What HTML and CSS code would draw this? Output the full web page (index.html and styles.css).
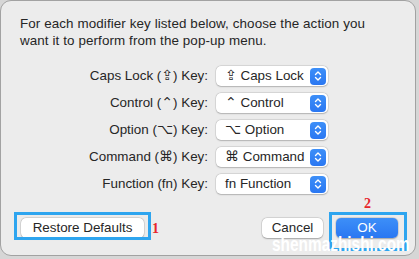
FILE: index.html
```html
<!DOCTYPE html>
<html>
<head>
<meta charset="utf-8">
<link rel="stylesheet" href="styles.css">
</head>
<body>
<div class="window">
  <p class="intro">For each modifier key listed below, choose the action you<br>want it to perform from the pop-up menu.</p>
  <div class="rows">
    <span class="label">Caps Lock (<span class="sym">⇪</span>) Key:</span>
    <div class="popup"><span class="value"><span class="sym">⇪</span> Caps Lock</span><span class="stepper"><svg width="8" height="12" viewBox="0 0 8 12"><path d="M1.5 4.5 L4 2 L6.5 4.5 M1.5 7.5 L4 10 L6.5 7.5" fill="none" stroke="#fff" stroke-width="1.4" stroke-linecap="round" stroke-linejoin="round"/></svg></span></div>
    <span class="label">Control (<span class="sym">⌃</span>) Key:</span>
    <div class="popup"><span class="value"><span class="sym">⌃</span> Control</span><span class="stepper"><svg width="8" height="12" viewBox="0 0 8 12"><path d="M1.5 4.5 L4 2 L6.5 4.5 M1.5 7.5 L4 10 L6.5 7.5" fill="none" stroke="#fff" stroke-width="1.4" stroke-linecap="round" stroke-linejoin="round"/></svg></span></div>
    <span class="label">Option (<span class="sym">⌥</span>) Key:</span>
    <div class="popup"><span class="value"><span class="sym">⌥</span> Option</span><span class="stepper"><svg width="8" height="12" viewBox="0 0 8 12"><path d="M1.5 4.5 L4 2 L6.5 4.5 M1.5 7.5 L4 10 L6.5 7.5" fill="none" stroke="#fff" stroke-width="1.4" stroke-linecap="round" stroke-linejoin="round"/></svg></span></div>
    <span class="label">Command (<span class="sym">⌘</span>) Key:</span>
    <div class="popup"><span class="value"><span class="sym">⌘</span> Command</span><span class="stepper"><svg width="8" height="12" viewBox="0 0 8 12"><path d="M1.5 4.5 L4 2 L6.5 4.5 M1.5 7.5 L4 10 L6.5 7.5" fill="none" stroke="#fff" stroke-width="1.4" stroke-linecap="round" stroke-linejoin="round"/></svg></span></div>
    <span class="label">Function (fn) Key:</span>
    <div class="popup"><span class="value">fn Function</span><span class="stepper"><svg width="8" height="12" viewBox="0 0 8 12"><path d="M1.5 4.5 L4 2 L6.5 4.5 M1.5 7.5 L4 10 L6.5 7.5" fill="none" stroke="#fff" stroke-width="1.4" stroke-linecap="round" stroke-linejoin="round"/></svg></span></div>
  </div>
  <div class="footer">
    <button class="btn btn-restore">Restore Defaults</button>
    <div class="spacer"></div>
    <button class="btn btn-cancel">Cancel</button>
    <button class="btn btn-ok">OK</button>
  </div>
  <div class="mark mark-1"></div>
  <div class="mark mark-2"></div>
  <span class="num num-1">1</span>
  <span class="num num-2">2</span>
  <span class="watermark">shenmazhishi.com</span>
</div>
</body>
</html>
```

FILE: styles.css
```css
html, body {
  margin: 0;
  padding: 0;
}
body {
  background: #d6d6d6;
  width: 419px;
  height: 259px;
  overflow: hidden;
  font-family: "Liberation Sans", Arial, sans-serif;
  font-size: 13.4px;
  color: #262626;
}
.window {
  position: relative;
  box-sizing: border-box;
  width: 416px;
  height: 256px;
  border: 1px solid #a2a2a2;
  border-radius: 11px;
  background: #ececec;
  padding: 15px 17px 0 19px;
}
.intro {
  margin: 0;
  line-height: 16.5px;
  color: #262626;
  letter-spacing: 0.1px;
}
.sym {
  font-family: "DejaVu Sans", sans-serif;
  font-size: 14px;
  line-height: 1;
}
.rows {
  display: grid;
  grid-template-columns: 188px 112px;
  column-gap: 8px;
  row-gap: 7px;
  margin-top: 17px;
}
.label {
  text-align: right;
  line-height: 20px;
  height: 20px;
  white-space: nowrap;
}
.popup {
  display: flex;
  align-items: center;
  justify-content: space-between;
  height: 20px;
  box-sizing: border-box;
  background: #fff;
  border-radius: 5px;
  box-shadow: 0 0 0 0.5px rgba(0,0,0,0.12), 0 0.5px 1.5px rgba(0,0,0,0.2);
  padding: 0 2px 0 9px;
}
.value {
  white-space: nowrap;
  line-height: 20px;
}
.stepper {
  display: flex;
  align-items: center;
  justify-content: center;
  width: 16px;
  height: 17px;
  border-radius: 4px;
  background: linear-gradient(#3d8ff8, #2a77f2);
}
.footer {
  display: flex;
  align-items: center;
  margin-top: 24px;
  gap: 13px;
}
.spacer {
  flex: 1;
}
.btn {
  font: inherit;
  height: 20px;
  line-height: 20px;
  padding: 0;
  border: none;
  border-radius: 5px;
  background: #fff;
  color: #262626;
  box-shadow: 0 0 0 0.5px rgba(0,0,0,0.12), 0 0.5px 1.5px rgba(0,0,0,0.25);
  text-align: center;
}
.btn-restore {
  width: 123px;
  margin-left: 1px;
}
.btn-cancel {
  width: 61px;
}
.btn-ok {
  width: 62px;
  color: #fff;
  background: linear-gradient(#3d8ff8, #2a77f2);
}
.mark {
  position: absolute;
  box-sizing: border-box;
  border: 3px solid #2ea5ef;
}
.mark-1 {
  left: 13px;
  top: 211px;
  width: 137px;
  height: 28px;
}
.mark-2 {
  left: 328px;
  top: 211px;
  width: 78px;
  height: 39px;
}
.num {
  position: absolute;
  font-family: "Liberation Serif", serif;
  font-weight: bold;
  font-size: 14px;
  color: #e8262b;
  line-height: 14px;
}
.num-1 {
  left: 151px;
  top: 221px;
}
.num-2 {
  left: 363px;
  top: 196px;
}
.watermark {
  position: absolute;
  left: 271px;
  top: 233px;
  font-family: "Liberation Sans", Arial, sans-serif;
  font-weight: bold;
  font-size: 20px;
  line-height: 20px;
  color: #fff;
  transform: scaleX(0.77);
  transform-origin: left top;
  white-space: nowrap;
}
```
